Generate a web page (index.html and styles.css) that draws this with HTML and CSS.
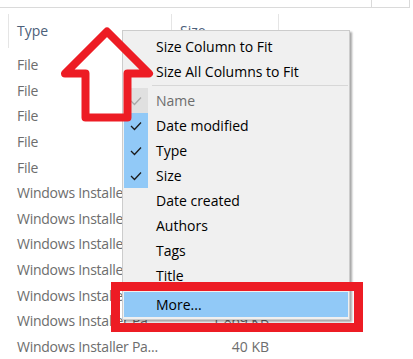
FILE: index.html
```html
<!DOCTYPE html>
<html lang="en">
<head>
    <meta charset="UTF-8">
    <meta name="viewport" content="width=device-width, initial-scale=1.0">
    <title>Explorer - Column Menu</title>
    <link rel="stylesheet" href="styles.css">
</head>
<body>
    <div class="topbar">
        <div class="search-edge"></div>
    </div>

    <div class="list">
        <div class="list-header">
            <div class="col col-type">Type</div>
            <div class="col col-size">Size</div>
            <div class="col col-rest"></div>
        </div>
        <div class="rows">
            <div class="row"><div class="cell cell-type">File</div><div class="cell cell-size"></div></div>
            <div class="row"><div class="cell cell-type">File</div><div class="cell cell-size"></div></div>
            <div class="row"><div class="cell cell-type">File</div><div class="cell cell-size"></div></div>
            <div class="row"><div class="cell cell-type">File</div><div class="cell cell-size"></div></div>
            <div class="row"><div class="cell cell-type">File</div><div class="cell cell-size"></div></div>
            <div class="row"><div class="cell cell-type">Windows Installer Pa...</div><div class="cell cell-size"></div></div>
            <div class="row"><div class="cell cell-type">Windows Installer Pa...</div><div class="cell cell-size"></div></div>
            <div class="row"><div class="cell cell-type">Windows Installer Pa...</div><div class="cell cell-size"></div></div>
            <div class="row"><div class="cell cell-type">Windows Installer Pa...</div><div class="cell cell-size"></div></div>
            <div class="row"><div class="cell cell-type">Windows Installer Pa...</div><div class="cell cell-size"></div></div>
            <div class="row"><div class="cell cell-type">Windows Installer Pa...</div><div class="cell cell-size">1 869 KB</div></div>
            <div class="row"><div class="cell cell-type">Windows Installer Pa...</div><div class="cell cell-size">40 KB</div></div>
        </div>
    </div>

    <!-- right-click menu on the column header -->
    <div class="context-menu">
        <div class="menu-item"><span class="check"></span><span class="label">Size Column to Fit</span></div>
        <div class="menu-item"><span class="check"></span><span class="label">Size All Columns to Fit</span></div>
        <div class="menu-sep"></div>
        <div class="menu-item disabled checked">
            <span class="check"><svg width="12" height="10" viewBox="0 0 12 10"><path d="M1 5 L4.5 8.5 L11 1.5"/></svg></span>
            <span class="label">Name</span>
        </div>
        <div class="menu-item checked">
            <span class="check"><svg width="12" height="10" viewBox="0 0 12 10"><path d="M1 5 L4.5 8.5 L11 1.5"/></svg></span>
            <span class="label">Date modified</span>
        </div>
        <div class="menu-item checked">
            <span class="check"><svg width="12" height="10" viewBox="0 0 12 10"><path d="M1 5 L4.5 8.5 L11 1.5"/></svg></span>
            <span class="label">Type</span>
        </div>
        <div class="menu-item checked">
            <span class="check"><svg width="12" height="10" viewBox="0 0 12 10"><path d="M1 5 L4.5 8.5 L11 1.5"/></svg></span>
            <span class="label">Size</span>
        </div>
        <div class="menu-item"><span class="check"></span><span class="label">Date created</span></div>
        <div class="menu-item"><span class="check"></span><span class="label">Authors</span></div>
        <div class="menu-item"><span class="check"></span><span class="label">Tags</span></div>
        <div class="menu-item"><span class="check"></span><span class="label">Title</span></div>
        <div class="menu-sep"></div>
        <div class="menu-item active"><span class="check"></span><span class="label">More...</span></div>
    </div>

    <!-- annotations drawn on top of the screenshot -->
    <svg class="arrow" width="413" height="359" viewBox="0 0 413 359">
        <polygon points="107,31.5 149,73.5 127.5,73.5 127.5,117.5 85.5,117.5 85.5,73.5 65,73.5"/>
    </svg>
    <div class="mark-box"></div>
</body>
</html>
```

FILE: styles.css
```css
* {
    margin: 0;
    padding: 0;
    box-sizing: border-box;
}

body {
    font-family: 'Open Sans', 'Noto Sans', sans-serif;
    font-size: 14px;
    background: white;
    width: 413px;
    height: 359px;
    overflow: hidden;
    position: relative;
}

.topbar {
    width: 410px;
    height: 8px;
    border-bottom: 1px solid #dadada;
    border-right: 1px solid #dadada;
    display: flex;
    justify-content: flex-end;
}

.search-edge {
    width: 38px;
    height: 100%;
    border-left: 1px solid #dadada;
}

.list {
    padding: 6px 0 0 8px;
}

.list-header {
    display: flex;
    height: 34px;
}

.list-header .col {
    border-left: 1px solid #e5e5e5;
    color: #4c607a;
    display: flex;
    align-items: center;
    padding-left: 8px;
    padding-bottom: 2px;
}

.col-type {
    width: 163px;
}

.col-size {
    width: 107px;
}

.col-rest {
    width: 40px;
}

.rows {
    padding-top: 4px;
}

.row {
    display: flex;
    height: 25.6px;
    align-items: center;
    color: #6d6d6d;
}

.cell-type {
    width: 163px;
    padding-left: 9px;
    white-space: nowrap;
    overflow: hidden;
    letter-spacing: -0.25px;
}

.cell-size {
    width: 107px;
    text-align: right;
    padding-right: 9px;
    white-space: nowrap;
}

.context-menu {
    position: absolute;
    left: 122px;
    top: 30px;
    width: 228px;
    background: #f0f0f0;
    border: 1px solid #cccccc;
    padding: 3px 1px 2px 1px;
    box-shadow: 2px 2px 2px rgba(0,0,0,0.35);
}

.menu-item {
    display: flex;
    align-items: center;
    height: 25px;
    color: #000;
}

.menu-item .check {
    width: 24px;
    height: 25px;
    display: flex;
    align-items: center;
    justify-content: center;
}

.menu-item .check svg path {
    fill: none;
    stroke: #1a1a1a;
    stroke-width: 1.3;
}

.menu-item.checked .check {
    background: #91c9f7;
}

.menu-item.disabled {
    color: #6d6d6d;
}

.menu-item.disabled .check {
    background: #e0e0e0;
}

.menu-item.disabled .check svg path {
    stroke: #a8a8a8;
}

.menu-item .label {
    padding-left: 8px;
}

.menu-item.active {
    background: #91c9f7;
}

.menu-sep {
    height: 1px;
    background: #d7d7d7;
    margin: 1px 0 2px 28px;
}

.arrow {
    position: absolute;
    left: 0;
    top: 0;
    pointer-events: none;
}

.arrow polygon {
    fill: none;
    stroke: #ed1c24;
    stroke-width: 8;
    stroke-linejoin: round;
}

.mark-box {
    position: absolute;
    left: 111px;
    top: 282px;
    width: 252px;
    height: 50px;
    border: 9px solid #ed1c24;
}
```
